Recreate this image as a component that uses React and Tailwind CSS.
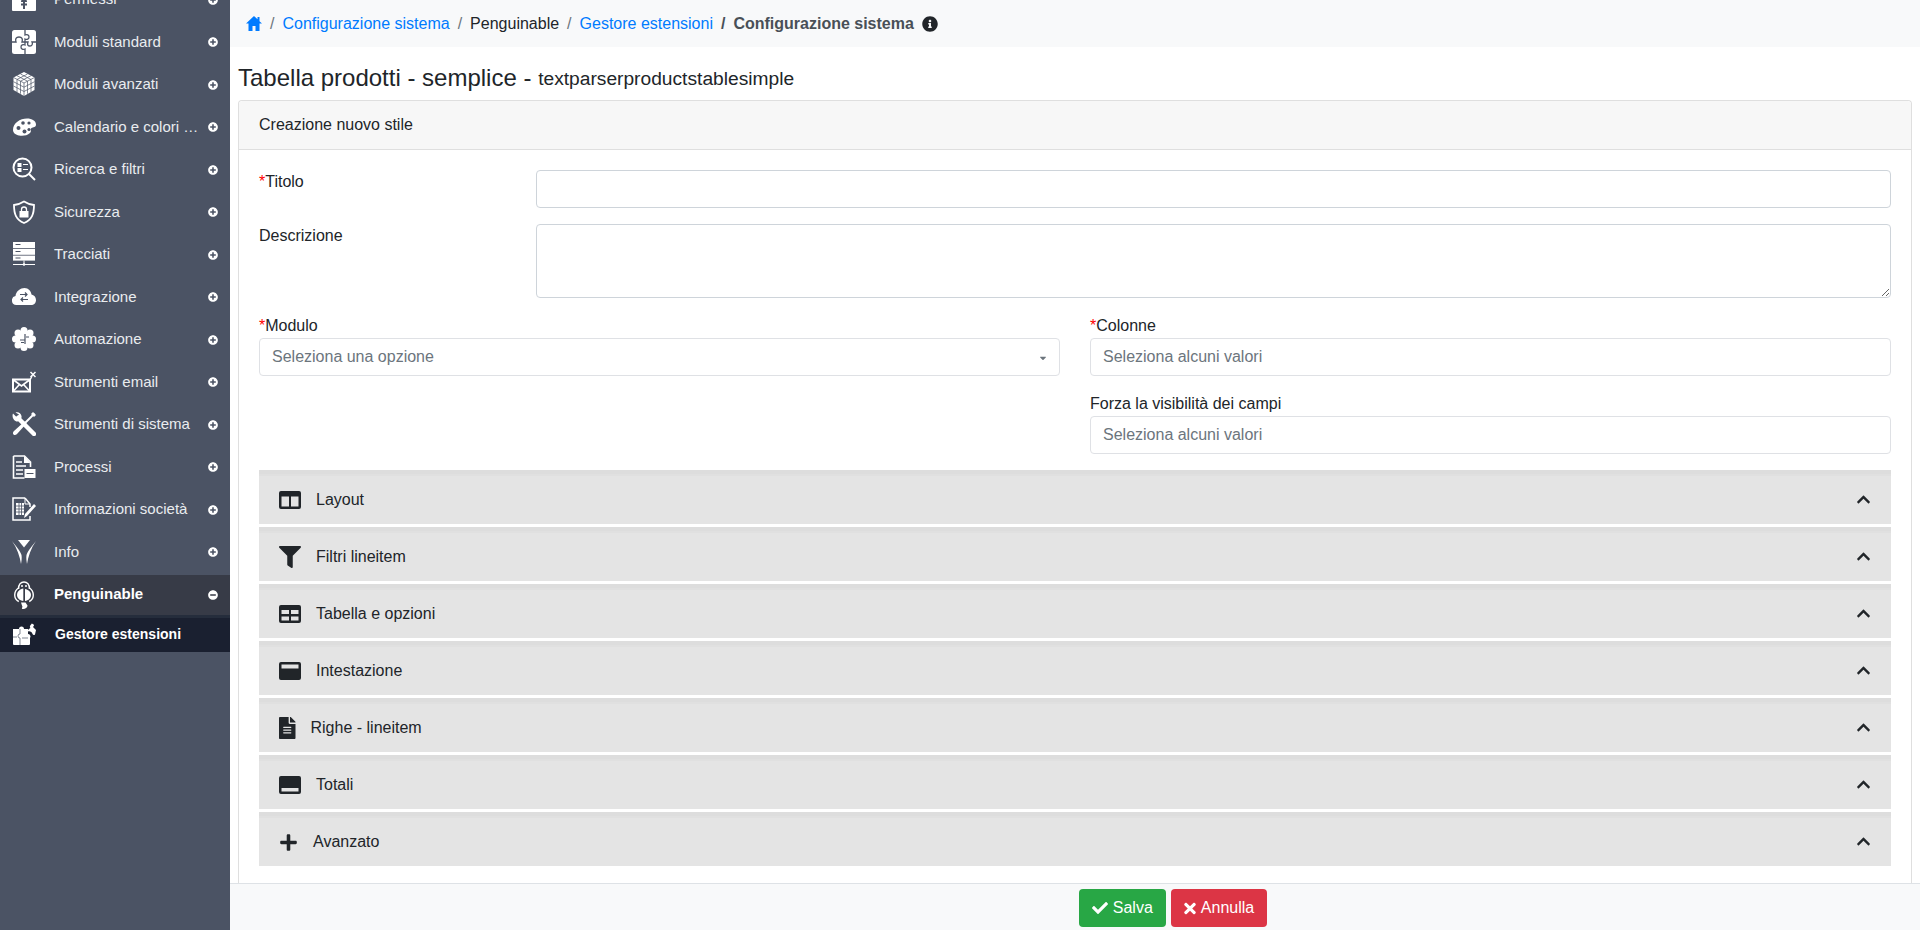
import React from 'react';
import { FaInfoCircle, FaPlusCircle, FaMinusCircle, FaCheck, FaTimes, FaFilter, FaFileAlt, FaPlus, FaChevronUp, FaCaretDown } from 'react-icons/fa';

const BG = '#4b5364';

// Sidebar icons, 24x24
const IconLock = () => (
  <svg viewBox="0 0 24 24" className="w-[24px] h-[24px]">
    <rect x="0" y="0" width="24" height="24" rx="1" fill="#fff" />
    <path d="M12 14v8M9 17.500h6M10 15a2 2 0 0 1 4 0" fill="none" stroke={BG} strokeWidth="2" />
  </svg>
);

const IconPuzzle = () => (
  <svg viewBox="0 0 24 24" className="w-[24px] h-[24px]">
    <rect x="0" y="0" width="24" height="24" rx="2.500" fill="#fff" />
    <path d="M13 0v5c2-1 4 0 4 2s-2 3-4 2v3M0 12h4c-1-3 0-5 3-5s4 2 3 5h3M13 12h3c-1 3 0 4 2 4s3-2 2-4h4M13 12v3c-2-1-4 0-4 2s2 3 4 2v5" fill="none" stroke={BG} strokeWidth="1.300" />
  </svg>
);

const IconCube = () => (
  <svg viewBox="0 0 24 24" className="w-[24px] h-[24px]">
    <path d="M12 0l10.500 5.500v12.500L12 24 1.500 18V5.500z" fill="#fff" />
    <path d="M1.500 5.500L12 11l10.500-5.500M12 11v13M5 3.700l10.500 5.500M8.500 2l10.500 5.500M19 3.700L8.500 9.200M15.500 2L5 7.500M5 7.500v12.500M8.500 9.200v12.500M15.500 9.200v12.500M19 7.500v12.500M1.500 9.700L12 15.200l10.500-5.500M1.500 14L12 19.500 22.500 14" fill="none" stroke={BG} strokeWidth=".7" />
  </svg>
);

const IconPalette = () => (
  <svg viewBox="0 0 24 18" className="w-[24px] h-[18px]">
    <path d="M1 12C1 5 8 .5 15 .5c5 0 9 2.500 9 6 0 3-3 2.500-4.500 3.500S20 13 18 15c-3 3-8 3-11 2.500S1 15 1 12z" fill="#fff" />
    <circle cx="6.500" cy="10" r="2" fill={BG} />
    <circle cx="11" cy="5" r="1.800" fill={BG} />
    <circle cx="17" cy="5" r="1.600" fill={BG} />
    <circle cx="17" cy="11.500" r="1.600" fill={BG} />
    <circle cx="12.500" cy="13.500" r="2" fill={BG} />
  </svg>
);

const IconSearchForm = () => (
  <svg viewBox="0 0 24 24" className="w-[24px] h-[24px]">
    <circle cx="10.500" cy="10.500" r="9" fill="none" stroke="#fff" strokeWidth="2" />
    <path d="M17 17l6 6" stroke="#fff" strokeWidth="2" />
    <rect x="5.500" y="6" width="4" height="4" fill="#fff" />
    <rect x="5.500" y="11" width="4" height="4" fill="#fff" />
    <path d="M11 7.500h5M11 12.500h5" stroke="#fff" strokeWidth="1.200" />
  </svg>
);

const IconShield = () => (
  <svg viewBox="0 0 24 24" className="w-[24px] h-[24px]">
    <path d="M12 1.500C9 3.500 6 4.500 2 5c0 9 2 14.500 10 18 8-3.500 10-9 10-18-4-.5-7-1.500-10-3.500z" fill="none" stroke="#fff" strokeWidth="1.800" />
    <rect x="7.500" y="11" width="9" height="6.500" fill="#fff" />
    <path d="M9.500 11V9.500a2.500 2.500 0 0 1 5 0V11" fill="none" stroke="#fff" strokeWidth="1.300" />
  </svg>
);

const IconServer = () => (
  <svg viewBox="0 0 24 24" className="w-[24px] h-[24px]">
    <rect x="1" y="0" width="22" height="6" fill="#fff" />
    <rect x="1" y="6.800" width="22" height="6" fill="#fff" />
    <rect x="1" y="13.600" width="22" height="5" fill="#fff" />
    <path d="M3.500 2.500h5M3.500 9.500h5M3.500 16h5" stroke={BG} strokeWidth="1" />
    <path d="M1 22.500h22M12 18.500v4" stroke="#fff" strokeWidth="1" />
    <circle cx="12" cy="22.500" r="1.300" fill="#fff" />
  </svg>
);

const IconCloud = () => (
  <svg viewBox="0 0 24 17" className="w-[24px] h-[17px]">
    <path d="M4.500 17a4.500 4.500 0 0 1-1-8.900C4 3 8.500 0 12.500 0c4 0 6.500 3 7 6.500 2.500.5 4.500 2.500 4.500 5.500s-2 5-5 5z" fill="#fff" />
    <path d="M8 6.500h7m-2-2l2 2-2 2M16 11.500H9m2-2l-2 2 2 2" fill="none" stroke={BG} strokeWidth="1.200" />
  </svg>
);

const IconGear = () => (
  <svg viewBox="0 0 24 24" className="w-[24px] h-[24px]">
    <circle cx="12" cy="12" r="8" fill="#fff" />
    <circle cx="12" cy="3.500" r="3.500" fill="#fff" />
    <circle cx="12" cy="20.500" r="3.500" fill="#fff" />
    <circle cx="3.500" cy="12" r="3.500" fill="#fff" />
    <circle cx="20.500" cy="12" r="3.500" fill="#fff" />
    <circle cx="6" cy="6" r="3.500" fill="#fff" />
    <circle cx="18" cy="6" r="3.500" fill="#fff" />
    <circle cx="6" cy="18" r="3.500" fill="#fff" />
    <circle cx="18" cy="18" r="3.500" fill="#fff" />
    <path d="M13 7v10M8 13h5M9 15.500h3M14 10h3" stroke={BG} strokeWidth="1.200" />
  </svg>
);

const IconMail = () => (
  <svg viewBox="0 0 24 24" className="w-[24px] h-[24px]">
    <rect x="1" y="9.500" width="17" height="12" fill="none" stroke="#fff" strokeWidth="2" />
    <path d="M1 9.500l8.500 6.500L18 9.500M1 21.500l6-6.500M18 21.500l-6-6.500" fill="none" stroke="#fff" strokeWidth="1.600" />
    <path d="M18.500 2l5 5M23.500 2l-5 5M17 12l3-6" stroke="#fff" strokeWidth="1.500" />
  </svg>
);

const IconTools = () => (
  <svg viewBox="0 0 24 24" className="w-[24px] h-[24px]">
    <path d="M6 6l16 16" stroke="#fff" strokeWidth="4.500" strokeLinecap="round" />
    <path d="M1 1.500l3.500 3.500 2.500-2.500L3.500.5C6-.5 9 1 9.500 4c.3 2-.5 3-1 4l-3 1.500C2 9.500-.5 5 1 1.500z" fill="#fff" />
    <path d="M22.500 1.500L12 12" stroke="#fff" strokeWidth="2" />
    <path d="M12.500 9.500l2 2L5 22c-1 1-2.500 1.500-3.500.5s-.5-2.500.5-3.500z" fill="#fff" />
    <path d="M21 0l3 3-2 2-3-3z" fill="#fff" />
  </svg>
);

const IconDoc = () => (
  <svg viewBox="0 0 24 24" className="w-[24px] h-[24px]">
    <path d="M1.500 1h11l6 6v5" fill="none" stroke="#fff" strokeWidth="1.600" />
    <path d="M1.500 1v22h11" fill="none" stroke="#fff" strokeWidth="1.600" />
    <path d="M12 1v7h6.500z" fill="#fff" />
    <path d="M4 7h6M4 11h10M4 15h7M4 19h7" stroke="#fff" strokeWidth="1.500" />
    <rect x="12.500" y="14" width="11" height="9" fill="#fff" />
    <path d="M14.500 18.500h7" stroke={BG} strokeWidth="1" />
  </svg>
);

const IconCompany = () => (
  <svg viewBox="0 0 24 24" className="w-[24px] h-[24px]">
    <path d="M13 1H1v22h17v-4M13 1l5 6v3" fill="none" stroke="#fff" strokeWidth="1.500" />
    <path d="M13 1v6h5" fill="none" stroke="#fff" strokeWidth="1" />
    <rect x="4" y="6" width="8" height="12" fill="#fff" />
    <path d="M4 9h8M4 12h8M4 15h8M7 6v12M9.500 6v12" stroke={BG} strokeWidth=".8" />
    <path d="M12 21l1-4L22 7l2 2-9 10z" fill="#fff" />
  </svg>
);

const IconY = () => (
  <svg viewBox="0 0 24 24" className="w-[24px] h-[24px]">
    <path d="M6 0h12l-6 7.500z" fill="#fff" />
    <path d="M0 1c3.500 5 8 9 9.500 14 .5 3 0 6-.5 9C8 17 5 8 0 1zM24 1c-3.500 5-8 9-9.500 14-.5 3 0 6 .5 9 1-7 4-16 9-23z" fill="#fff" />
  </svg>
);

const IconPenguin = () => (
  <svg viewBox="0 0 20 29" className="w-[20px] h-[29px]">
    <path d="M4.500 8C4.500 3.500 7 1 10 1s5.500 2.500 5.500 7" fill="none" stroke="#fff" strokeWidth="1.600" />
    <path d="M4.500 7C1.500 9 .5 12 .8 15c.2 2.500 2 4.500 4 5.500M15.500 7c3 2 4 5 3.700 8-.2 2.500-2 4.500-4 5.500" fill="none" stroke="#fff" strokeWidth="1.400" />
    <path d="M9.300 7.500C6 8 3 10.500 3 14c0 3 2.500 5.500 6.300 6z" fill="#fff" />
    <path d="M11 8c3 .5 6 2.500 6 6 0 3-2.500 5.500-6 6z" fill="#fff" />
    <path d="M7 21.500h4.500l2 3c0 2.500-3 4-5 3.500-1-.3-.5-1.500 0-2z" fill="#fff" />
    <circle cx="8" cy="5" r="1" fill="#fff" /><circle cx="12" cy="5" r="1" fill="#fff" />
  </svg>
);

const IconExtensions = () => (
  <svg viewBox="0 0 25 24" className="w-[25px] h-[24px]">
    <path d="M1 6h6a2.500 2.500 0 0 1 5 0h4v5a2.500 2.500 0 0 1 2 4v6a1 1 0 0 1-1 1H2a1 1 0 0 1-1-1z" fill="#fff" />
    <path d="M8 6v5a2 2 0 0 0 0 4v7M1 14h4M10 15h6" fill="none" stroke={BG} strokeWidth=".7" />
    <path d="M19 1c2-1 3 .5 3 1.500l-1 1.500 3 3-1 4.500c-1 1-2 .5-2.500-.5-.5-2-2.500-3-4.500-2.500-1-.5 1-3 2.500-3.500-1-1-1-2 1-4z" fill="#fff" />
  </svg>
);

const menu = [
  { label: 'Permessi', icon: <IconLock /> },
  { label: 'Moduli standard', icon: <IconPuzzle /> },
  { label: 'Moduli avanzati', icon: <IconCube /> },
  { label: 'Calendario e colori …', icon: <IconPalette /> },
  { label: 'Ricerca e filtri', icon: <IconSearchForm /> },
  { label: 'Sicurezza', icon: <IconShield /> },
  { label: 'Tracciati', icon: <IconServer /> },
  { label: 'Integrazione', icon: <IconCloud /> },
  { label: 'Automazione', icon: <IconGear /> },
  { label: 'Strumenti email', icon: <IconMail /> },
  { label: 'Strumenti di sistema', icon: <IconTools /> },
  { label: 'Processi', icon: <IconDoc /> },
  { label: 'Informazioni società', icon: <IconCompany /> },
  { label: 'Info', icon: <IconY /> },
];

// Accordion head icons
const IconColumns = () => (
  <svg viewBox="0 0 22 18" className="w-[22px] h-[18px]">
    <path fillRule="evenodd" d="M2 0h18a2 2 0 0 1 2 2v14a2 2 0 0 1-2 2H2a2 2 0 0 1-2-2V2a2 2 0 0 1 2-2zM2.500 5.500v10H10v-10zM12 5.500v10h7.500v-10z" fill="#212529" />
  </svg>
);

const IconTable = () => (
  <svg viewBox="0 0 22 18" className="w-[22px] h-[18px]">
    <path fillRule="evenodd" d="M2 0h18a2 2 0 0 1 2 2v14a2 2 0 0 1-2 2H2a2 2 0 0 1-2-2V2a2 2 0 0 1 2-2zM2.500 5v4H10V5zM12 5v4h7.500V5zM2.500 11.500v4H10v-4zM12 11.500v4h7.500v-4z" fill="#212529" />
  </svg>
);

const IconHeader = () => (
  <svg viewBox="0 0 22 18" className="w-[22px] h-[18px]">
    <path fillRule="evenodd" d="M2 0h18a2 2 0 0 1 2 2v14a2 2 0 0 1-2 2H2a2 2 0 0 1-2-2V2a2 2 0 0 1 2-2zM2.500 2.500v4h17v-4z" fill="#212529" />
  </svg>
);

const IconFooter = () => (
  <svg viewBox="0 0 22 18" className="w-[22px] h-[18px]">
    <path fillRule="evenodd" d="M2 0h18a2 2 0 0 1 2 2v14a2 2 0 0 1-2 2H2a2 2 0 0 1-2-2V2a2 2 0 0 1 2-2zM2.500 12v3.500h17V12z" fill="#212529" />
  </svg>
);

const IconHome = () => (
  <svg viewBox="0 0 16 15" className="w-[16px] h-[15px]">
    <path d="M8 0L0 7.500h2.500V15H6.500v-5h3v5h4V7.500H16l-2.500-2.300V1h-2v2.300z" fill="#007bff" />
  </svg>
);

const sections = [
  { label: 'Layout', icon: <IconColumns /> },
  { label: 'Filtri lineitem', icon: <FaFilter size={22} /> },
  { label: 'Tabella e opzioni', icon: <IconTable /> },
  { label: 'Intestazione', icon: <IconHeader /> },
  { label: 'Righe - lineitem', icon: <FaFileAlt className="w-[16.5px] h-[22px]" /> },
  { label: 'Totali', icon: <IconFooter /> },
  { label: 'Avanzato', icon: <FaPlus size={19} /> },
];

const inputClass = 'w-full h-[38px] px-[12px] bg-white border border-[#ced4da] rounded-[4px] text-[16px] outline-none placeholder:text-[#6c757d]';
const selectClass = 'w-full h-[38px] px-[12px] bg-white border border-[#dfe1e5] rounded-[4px] flex items-center text-[16px] text-[#6c757d]';

const Star = () => <span className="text-[#ff0000]">*</span>;

export default function App() {
  return (
    <div className="flex h-[930px] w-[1920px] overflow-hidden bg-white text-[#212529] text-[16px] leading-[24px] font-['Liberation_Sans',Arial,sans-serif]">
      <aside className="w-[230px] shrink-0 bg-[#4b5364] overflow-hidden text-white">
        <div className="mt-[-22px]">
          {menu.map(item => (
            <div key={item.label} className="h-[42.5px] flex items-center pl-[12px] pr-[12px]">
              <div className="w-[24px] h-[24px] flex items-center justify-center text-white shrink-0">{item.icon}</div>
              <span className="ml-[18px] flex-1 text-[15px] text-[#e9ecef] whitespace-nowrap overflow-hidden">{item.label}</span>
              <FaPlusCircle size={10} className="shrink-0 mt-[1px]" />
            </div>
          ))}
          <div className="mt-[2px] h-[40px] bg-[#373b47] flex items-center pl-[12px] pr-[12px]">
            <div className="w-[24px] h-[29px] flex items-center justify-center shrink-0"><IconPenguin /></div>
            <span className="ml-[18px] mb-[3px] flex-1 text-[15px] font-bold">Penguinable</span>
            <FaMinusCircle size={10} className="shrink-0" />
          </div>
          <div className="border-t-[3px] border-[#252d3c] h-[37px] bg-[#1a2030] flex items-center pl-[12px] pr-[12px]">
            <div className="w-[25px] h-[24px] shrink-0"><IconExtensions /></div>
            <span className="ml-[18px] mb-[2px] text-[14px] font-bold">Gestore estensioni</span>
          </div>
        </div>
      </aside>

      <main className="flex-1 flex flex-col min-w-0">
        <nav className="h-[47px] bg-[#f8f9fa] flex items-center pl-[16px] text-[16px] shrink-0">
          <IconHome />
          <span className="mx-[8px] text-[#6c757d]">/</span>
          <a className="text-[#007bff]">Configurazione sistema</a>
          <span className="mx-[8px] text-[#6c757d]">/</span>
          <span>Penguinable</span>
          <span className="mx-[8px] text-[#6c757d]">/</span>
          <a className="text-[#007bff]">Gestore estensioni</a>
          <span className="mx-[8px] font-bold text-[#495057]">/</span>
          <span className="font-bold text-[#495057]">Configurazione sistema</span>
          <FaInfoCircle size={16} className="ml-[8px] text-[#212529]" />
        </nav>

        <div className="flex-1 px-[8px] flex flex-col min-h-0">
          <h1 className="h-[53px] flex items-center text-[24px] leading-[29px] font-normal pt-[8px]">
            Tabella prodotti - semplice -&nbsp;<small className="text-[19.2px] pt-[2px]">textparserproductstablesimple</small>
          </h1>
          <section className="flex-1 border border-[#dfdfdf] rounded-t-[4px] border-b-0 flex flex-col min-h-0">
            <header className="h-[49px] shrink-0 bg-[#f7f7f7] border-b border-[#dfdfdf] flex items-center px-[20px] rounded-t-[4px]">
              Creazione nuovo stile
            </header>
            <div className="px-[20px] pt-[20px]">
              <div className="flex">
                <label className="w-[277px] shrink-0"><Star />Titolo</label>
                <input className={inputClass} />
              </div>
              <div className="flex mt-[16px]">
                <label className="w-[277px] shrink-0">Descrizione</label>
                <textarea className="w-full h-[74px] px-[12px] py-[6px] bg-white border border-[#ced4da] rounded-[4px] outline-none block" />
              </div>
              <div className="grid grid-cols-2 gap-x-[30px] mt-[16px]">
                <div>
                  <label className="block h-[24px]"><Star />Modulo</label>
                  <div className={selectClass}>
                    <span className="flex-1">Seleziona una opzione</span>
                    <FaCaretDown size={10} className="text-[#6c757d] mt-[2px] mr-[-1px]" />
                  </div>
                </div>
                <div>
                  <label className="block h-[24px]"><Star />Colonne</label>
                  <div className={selectClass}>Seleziona alcuni valori</div>
                </div>
                <div />
                <div className="mt-[16px]">
                  <label className="block h-[24px]">Forza la visibilità dei campi</label>
                  <div className={selectClass}>Seleziona alcuni valori</div>
                </div>
              </div>
              <div className="mt-[16px] flex flex-col gap-[3px]">
                {sections.map(s => (
                  <div key={s.label} className="h-[54px] bg-[#e4e4e4] border-t-[4px] border-[#dddddd]">
                    <div className="h-full border-t-2 border-[#e0e0e0] flex items-center pl-[20px] pr-[20px]">
                      <div className="shrink-0 flex items-center text-[#212529]">{s.icon}</div>
                      <span className="ml-[15px] flex-1">{s.label}</span>
                      <FaChevronUp size={15} className="text-[#212529] mb-[2px]" />
                    </div>
                  </div>
                ))}
              </div>
            </div>
          </section>
        </div>

        <footer className="h-[47px] shrink-0 bg-[#f8f9fa] border-t border-[#dee2e6] flex items-center justify-center gap-[5px] pl-[196px] pt-[2px]">
          <button className="h-[38px] px-[13px] bg-[#28a745] text-white rounded-[4px] flex items-center gap-[5px]">
            <FaCheck size={16} /> Salva
          </button>
          <button className="h-[38px] px-[13px] bg-[#dc3545] text-white rounded-[4px] flex items-center gap-[5px]">
            <FaTimes className="w-[12px] h-[17px]" /> Annulla
          </button>
        </footer>
      </main>
    </div>
  );
}
